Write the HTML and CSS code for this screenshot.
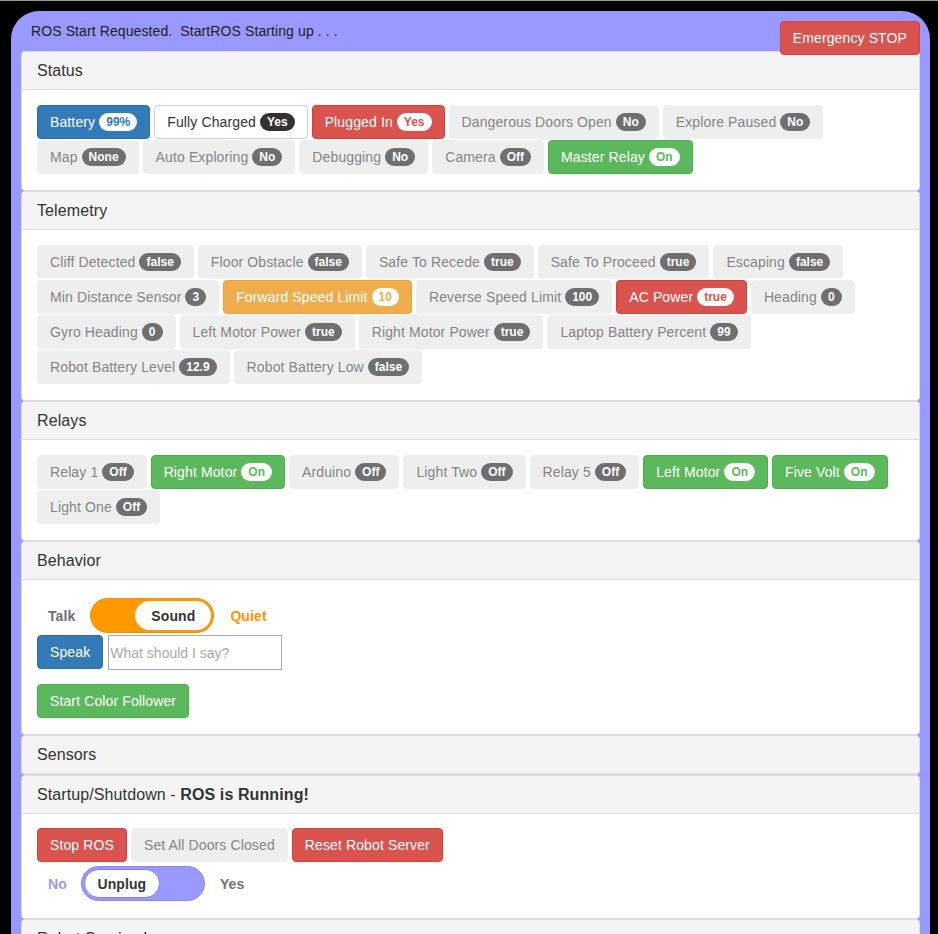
FILE: index.html
```html
<!DOCTYPE html>
<html>
<head>
<meta charset="utf-8">
<title>Robot Control</title>
<link rel="stylesheet" href="styles.css">
</head>
<body>
<div class="frame">
  <div class="topbar">
    <div class="status-msg">ROS Start Requested.&nbsp; StartROS Starting up . . .</div>
    <button class="btn btn-danger estop">Emergency STOP</button>
  </div>

  <div class="panel">
    <div class="panel-heading">Status</div>
    <div class="panel-body">
      <div class="btn-row">
        <span class="btn btn-primary">Battery <span class="badge">99%</span></span>
        <span class="btn btn-default">Fully Charged <span class="badge">Yes</span></span>
        <span class="btn btn-danger">Plugged In <span class="badge">Yes</span></span>
        <span class="btn btn-muted">Dangerous Doors Open <span class="badge">No</span></span>
        <span class="btn btn-muted">Explore Paused <span class="badge">No</span></span>
        <span class="btn btn-muted">Map <span class="badge">None</span></span>
        <span class="btn btn-muted">Auto Exploring <span class="badge">No</span></span>
        <span class="btn btn-muted">Debugging <span class="badge">No</span></span>
        <span class="btn btn-muted">Camera <span class="badge">Off</span></span>
        <span class="btn btn-success">Master Relay <span class="badge">On</span></span>
      </div>
    </div>
  </div>

  <div class="panel">
    <div class="panel-heading">Telemetry</div>
    <div class="panel-body">
      <div class="btn-row">
        <span class="btn btn-muted">Cliff Detected <span class="badge">false</span></span>
        <span class="btn btn-muted">Floor Obstacle <span class="badge">false</span></span>
        <span class="btn btn-muted">Safe To Recede <span class="badge">true</span></span>
        <span class="btn btn-muted">Safe To Proceed <span class="badge">true</span></span>
        <span class="btn btn-muted">Escaping <span class="badge">false</span></span>
        <span class="btn btn-muted">Min Distance Sensor <span class="badge">3</span></span>
        <span class="btn btn-warning">Forward Speed Limit <span class="badge">10</span></span>
        <span class="btn btn-muted">Reverse Speed Limit <span class="badge">100</span></span>
        <span class="btn btn-danger">AC Power <span class="badge">true</span></span>
        <span class="btn btn-muted">Heading <span class="badge">0</span></span>
        <span class="btn btn-muted">Gyro Heading <span class="badge">0</span></span>
        <span class="btn btn-muted">Left Motor Power <span class="badge">true</span></span>
        <span class="btn btn-muted">Right Motor Power <span class="badge">true</span></span>
        <span class="btn btn-muted">Laptop Battery Percent <span class="badge">99</span></span>
        <span class="btn btn-muted">Robot Battery Level <span class="badge">12.9</span></span>
        <span class="btn btn-muted">Robot Battery Low <span class="badge">false</span></span>
      </div>
    </div>
  </div>

  <div class="panel">
    <div class="panel-heading">Relays</div>
    <div class="panel-body">
      <div class="btn-row">
        <span class="btn btn-muted">Relay 1 <span class="badge">Off</span></span>
        <span class="btn btn-success">Right Motor <span class="badge">On</span></span>
        <span class="btn btn-muted">Arduino <span class="badge">Off</span></span>
        <span class="btn btn-muted">Light Two <span class="badge">Off</span></span>
        <span class="btn btn-muted">Relay 5 <span class="badge">Off</span></span>
        <span class="btn btn-success">Left Motor <span class="badge">On</span></span>
        <span class="btn btn-success">Five Volt <span class="badge">On</span></span>
        <span class="btn btn-muted">Light One <span class="badge">Off</span></span>
      </div>
    </div>
  </div>

  <div class="panel">
    <div class="panel-heading">Behavior</div>
    <div class="panel-body behavior-body">
      <div class="switch-row">
        <span class="switch-label label-gray">Talk</span>
        <div class="switch switch-orange">
          <span class="knob knob-right">Sound</span>
        </div>
        <span class="switch-label label-orange">Quiet</span>
      </div>
      <div class="speak-row">
        <button class="btn btn-primary">Speak</button>
        <input class="speak-input" type="text" placeholder="What should I say?">
      </div>
      <div class="follower-row">
        <button class="btn btn-success">Start Color Follower</button>
      </div>
    </div>
  </div>

  <div class="panel">
    <div class="panel-heading">Sensors</div>
  </div>

  <div class="panel">
    <div class="panel-heading">Startup/Shutdown - <strong>ROS is Running!</strong></div>
    <div class="panel-body startup-body">
      <div class="btn-row">
        <button class="btn btn-danger">Stop ROS</button>
        <button class="btn btn-muted">Set All Doors Closed</button>
        <button class="btn btn-danger">Reset Robot Server</button>
      </div>
      <div class="switch-row unplug-row">
        <span class="switch-label label-purple">No</span>
        <div class="switch switch-purple">
          <span class="knob knob-left">Unplug</span>
        </div>
        <span class="switch-label label-gray">Yes</span>
      </div>
    </div>
  </div>

  <div class="panel">
    <div class="panel-heading">Robot Service Log</div>
    <div class="panel-body"></div>
  </div>
</div>
</body>
</html>
```

FILE: styles.css
```css
* { box-sizing: border-box; }

html, body {
  margin: 0;
  padding: 0;
  background: #000;
}

body {
  border-top: 1px solid #9a9a9a;
  font-family: "Liberation Sans", Arial, sans-serif;
  font-size: 14px;
  line-height: 20px;
  letter-spacing: 0.1px;
  color: #333;
  overflow: hidden;
  height: 934px;
}

.frame {
  width: 919px;
  margin: 10px 0 0 11px;
  background: #9999ff;
  border-radius: 28px 28px 0 0;
  padding: 10px 10px 40px 10px;
  min-height: 960px;
}

.topbar {
  display: flex;
  justify-content: space-between;
  align-items: flex-start;
  height: 30px;
}

.status-msg {
  padding-left: 10px;
  line-height: 20px;
  color: #222;
}

.estop {
  position: relative;
  z-index: 2;
}

.panel {
  background: #fff;
  border: 1px solid #ddd;
  border-radius: 4px;
  overflow: hidden;
}

.panel-heading {
  background: #f4f4f4;
  padding: 10px 15px;
  font-size: 16px;
  line-height: 17px;
  color: #333;
  border-bottom: 1px solid #ddd;
}

.panel-heading strong { font-weight: bold; }

.panel-body {
  padding: 15px 15px 16px;
}

.btn-row {
  display: flex;
  flex-wrap: wrap;
  column-gap: 4px;
  row-gap: 1px;
}

.btn {
  display: inline-flex;
  align-items: center;
  height: 34px;
  padding: 6px 12px;
  font-family: "Liberation Sans", Arial, sans-serif;
  font-size: 14px;
  line-height: 20px;
  letter-spacing: 0.12px;
  border: 1px solid transparent;
  border-radius: 4px;
  white-space: nowrap;
  cursor: pointer;
}

.badge {
  display: inline-block;
  margin-left: 4px;
  padding: 3px 7px;
  font-size: 12px;
  font-weight: bold;
  line-height: 12px;
  letter-spacing: 0;
  border-radius: 10px;
  background: #777;
  color: #fff;
}

.btn-primary { background: #337ab7; border-color: #2e6da4; color: #fff; }
.btn-primary .badge { background: #fff; color: #337ab7; }

.btn-default { background: #fff; border-color: #ccc; color: #333; }
.btn-default .badge { background: #333; color: #fff; }

.btn-danger { background: #d9534f; border-color: #d43f3a; color: #fff; }
.btn-danger .badge { background: #fff; color: #d9534f; }

.btn-success { background: #5cb85c; border-color: #4cae4c; color: #fff; }
.btn-success .badge { background: #fff; color: #5cb85c; }

.btn-warning { background: #f0ad4e; border-color: #eea236; color: #fff; }
.btn-warning .badge { background: #fff; color: #f0ad4e; }

.btn-muted { background: #eee; border-color: #eee; color: #858585; }
.btn-muted .badge { background: #6f6f6f; color: #fff; }

/* Behavior */
.behavior-body { padding-top: 18px; }

.switch-row {
  display: flex;
  align-items: center;
  padding-left: 11px;
}

.switch-label {
  font-weight: bold;
  font-size: 14px;
}

.label-gray { color: #6b7080; }
.label-orange { color: #ff9500; }
.label-purple { color: #9999ff; }

.switch {
  width: 124px;
  height: 35px;
  border-radius: 18px;
  padding: 2px;
  display: flex;
  margin: 0 16px 0 15px;
}

.switch-orange {
  background: #ff9900;
  border: 1px solid #f09000;
  justify-content: flex-end;
}

.switch-purple {
  background: #9999ff;
  border: 1px solid #8888ee;
  justify-content: flex-start;
}

.knob {
  width: 76px;
  height: 100%;
  border-radius: 16px;
  background: #fff;
  display: flex;
  align-items: center;
  justify-content: center;
  font-weight: bold;
  color: #333;
  font-size: 14px;
}

.knob-left { border: 1px solid #8080e8; }

.speak-row {
  display: flex;
  align-items: flex-start;
  gap: 5px;
  margin-top: 2px;
}

.speak-input {
  width: 174px;
  height: 35px;
  border: 1px solid #a9a9a9;
  padding: 0 1px;
  font-family: "Liberation Sans", Arial, sans-serif;
  font-size: 14px;
  color: #333;
  background: #fff;
  outline: none;
  margin: 0;
}

.speak-input::placeholder { color: #a8a8a8; }

.follower-row { margin-top: 14px; }

/* Startup */
.startup-body { padding-top: 14px; padding-bottom: 17px; }

.unplug-row { margin-top: 4px; }
.unplug-row .switch { margin: 0 15px 0 14px; }
```
